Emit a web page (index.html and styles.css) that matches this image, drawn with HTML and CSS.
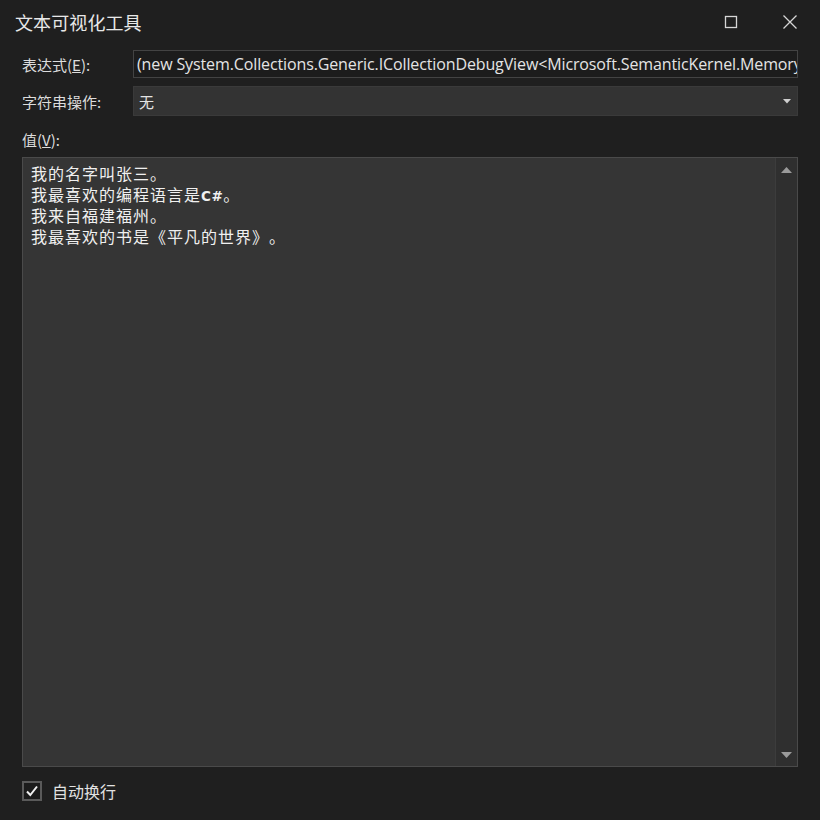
FILE: index.html
```html
<!DOCTYPE html>
<html lang="zh">
<head>
<meta charset="utf-8">
<link rel="stylesheet" href="styles.css">
</head>
<body>
<div class="dialog">
  <div class="titlebar">
    <div class="title">文本可视化工具</div>
    <div class="controls">
      <span class="ctl"><svg width="14" height="14" viewBox="0 0 14 14"><rect x="1.5" y="1.5" width="11" height="11" fill="none" stroke="#d6d6d6" stroke-width="1.3"/></svg></span>
      <span class="ctl"><svg width="16" height="16" viewBox="0 0 16 16"><path d="M1.5 1.5 L14.5 14.5 M14.5 1.5 L1.5 14.5" stroke="#d6d6d6" stroke-width="1.3"/></svg></span>
    </div>
  </div>
  <div class="form">
    <label class="lbl">表达式(<u>E</u>):</label>
    <div class="expr">(new System.Collections.Generic.ICollectionDebugView&lt;Microsoft.SemanticKernel.Memory.MemoryQueryResult&gt;(result).Items</div>
    <label class="lbl">字符串操作:</label>
    <div class="combo"><span>无</span><svg width="8" height="5" viewBox="0 0 8 5"><path d="M0 0 L8 0 L4 4.5 Z" fill="#cfcfcf"/></svg></div>
  </div>
  <div class="vlabel">值(<u>V</u>):</div>
  <div class="valuebox">
    <div class="text">
      <div class="line">我的名字叫张三。</div>
      <div class="line">我最喜欢的编程语言是<span class="code">C#</span>。</div>
      <div class="line">我来自福建福州。</div>
      <div class="line">我最喜欢的书是《平凡的世界》。</div>
    </div>
    <div class="scroll">
      <svg width="11" height="6" viewBox="0 0 11 6"><path d="M0 6 L11 6 L5.5 0 Z" fill="#9a9a9a"/></svg>
      <svg width="11" height="6" viewBox="0 0 11 6"><path d="M0 0 L11 0 L5.5 6 Z" fill="#9a9a9a"/></svg>
    </div>
  </div>
  <div class="footer">
    <span class="check"><svg width="14" height="12" viewBox="0 0 14 12"><path d="M2 6.5 L5.3 10 L12 1.5" fill="none" stroke="#f0f0f0" stroke-width="2"/></svg></span>
    <span class="wrap">自动换行</span>
  </div>
</div>
</body>
</html>
```
FILE: styles.css
```css
html, body {
  margin: 0;
  padding: 0;
  background: #1f1f1f;
}
body {
  width: 820px;
  height: 820px;
  overflow: hidden;
  font-family: "Noto Sans CJK SC", "Open Sans", sans-serif;
  color: #e6e6e6;
}
.dialog {
  display: flex;
  flex-direction: column;
  height: 820px;
}
.titlebar {
  display: flex;
  align-items: center;
  justify-content: space-between;
  height: 43px;
  padding-left: 15px;
}
.title {
  font-size: 18px;
  color: #e8e8e8;
  letter-spacing: 0.1px;
}
.controls {
  display: flex;
  align-items: center;
  height: 100%;
}
.ctl {
  width: 59px;
  display: flex;
  justify-content: center;
  align-items: center;
  height: 100%;
}
.ctl:last-child {
  width: 60px;
}
.form {
  display: grid;
  grid-template-columns: 111px 665px;
  row-gap: 8px;
  padding-left: 22px;
  margin-top: 7px;
  align-items: center;
}
.lbl {
  font-size: 15px;
  color: #dcdcdc;
}
.expr {
  box-sizing: border-box;
  border: 1px solid #434343;
  background: #1c1c1c;
  font-family: "Open Sans", "Noto Sans CJK SC", sans-serif;
  font-size: 16px;
  letter-spacing: -0.12px;
  padding-left: 3px;
  white-space: nowrap;
  overflow: hidden;
  text-overflow: clip;
  color: #e4e4e4;
  height: 28px;
  line-height: 26px;
}
.combo {
  height: 30px;
  box-sizing: border-box;
  background: #333333;
  border: 1px solid #3a3a3a;
  display: flex;
  align-items: center;
  justify-content: space-between;
  padding: 0 6px 0 5px;
  font-size: 15px;
  color: #e4e4e4;
}
.vlabel {
  font-size: 15px;
  color: #dcdcdc;
  padding-left: 22px;
  margin-top: 14px;
  line-height: 20px;
}
.valuebox {
  margin: 7px 0 0 22px;
  width: 776px;
  height: 610px;
  box-sizing: border-box;
  border: 1px solid #4a4a4a;
  background: #353535;
  display: flex;
}
.text {
  flex: 1;
  padding: 5px 0 0 8px;
  font-size: 16px;
  letter-spacing: 1px;
  line-height: 21px;
  color: #f0f0f0;
  text-spacing-trim: space-all;
}
.line {
  height: 21px;
}
.code {
  font-family: "DejaVu Sans", sans-serif;
  font-weight: bold;
  font-size: 13.5px;
  letter-spacing: 0.5px;
}
.scroll {
  width: 22px;
  border-left: 1px solid #3c3c3c;
  background: #2f2f2f;
  display: flex;
  flex-direction: column;
  justify-content: space-between;
  align-items: center;
  padding: 9px 0 8px;
  box-sizing: border-box;
}
.footer {
  display: flex;
  align-items: center;
  padding-left: 22px;
  margin-top: 12px;
}
.check {
  width: 20px;
  height: 20px;
  box-sizing: border-box;
  border: 2px solid #5a5a5a;
  background: #1b1b1b;
  display: flex;
  align-items: center;
  justify-content: center;
}
.wrap {
  margin-left: 10px;
  font-size: 16px;
  color: #e2e2e2;
}
```
